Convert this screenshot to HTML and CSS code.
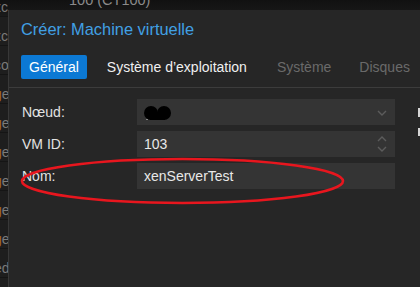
FILE: index.html
```html
<!DOCTYPE html>
<html lang="fr">
<head>
    <meta charset="UTF-8">
    <meta name="viewport" content="width=device-width, initial-scale=1.0">
    <title>Créer: Machine virtuelle</title>
    <link rel="stylesheet" href="styles.css">
</head>
<body>
    <!-- Liste en arrière-plan -->
    <div class="grid">
        <div class="row first"><span class="c1">xc</span><span class="c2">100 (CT100)</span></div>
        <div class="row"><span class="c1">xc</span></div>
        <div class="row"><span class="c1">co</span></div>
        <div class="row"><span class="c1 tag">ge</span></div>
        <div class="row"><span class="c1 tag">ge</span></div>
        <div class="row"><span class="c1 tag">ge</span></div>
        <div class="row"><span class="c1 tag">ge</span></div>
        <div class="row"><span class="c1 tag">ge</span></div>
        <div class="row"><span class="c1 tag">ge</span></div>
        <div class="row"><span class="c1">ed</span></div>
    </div>

    <!-- Fenêtre de création -->
    <div class="window">
        <div class="title">Créer: Machine virtuelle</div>

        <div class="tabs">
            <span class="tab active">Général</span>
            <span class="tab">Système d’exploitation</span>
            <span class="tab disabled">Système</span>
            <span class="tab disabled">Disques</span>
        </div>

        <div class="panel">
            <div class="form">
                <div class="field">
                    <label>Nœud:</label>
                    <div class="input">
                        <svg class="blob" width="28" height="15" viewBox="0 0 28 15">
                            <circle cx="7" cy="7" r="7" fill="#000"/>
                            <circle cx="20" cy="7" r="7" fill="#000"/>
                            <rect x="6" y="6" width="15" height="8" fill="#000"/>
                            <rect x="2" y="13" width="2" height="1" fill="#888"/>
                        </svg>
                        <svg class="chev" width="10" height="6" viewBox="0 0 10 6">
                            <path d="M1 1 L5 5 L9 1" fill="none" stroke="#5c5c5c" stroke-width="1.4"/>
                        </svg>
                    </div>
                </div>
                <div class="field">
                    <label>VM ID:</label>
                    <div class="input">
                        <span>103</span>
                        <span class="spin">
                            <svg width="10" height="6" viewBox="0 0 10 6">
                                <path d="M1 5 L5 1 L9 5" fill="none" stroke="#5c5c5c" stroke-width="1.4"/>
                            </svg>
                            <svg width="10" height="6" viewBox="0 0 10 6">
                                <path d="M1 1 L5 5 L9 1" fill="none" stroke="#5c5c5c" stroke-width="1.4"/>
                            </svg>
                        </span>
                    </div>
                </div>
                <div class="field">
                    <label>Nom:</label>
                    <div class="input"><span>xenServerTest</span></div>
                </div>
            </div>
            <div class="side">
                <span class="mark"></span>
                <span class="mark low"></span>
            </div>
        </div>
    </div>

    <!-- Annotation rouge -->
    <svg class="annot" width="420" height="287" viewBox="0 0 420 287">
        <ellipse cx="182.5" cy="181" rx="160.5" ry="22" fill="none" stroke="#e8161e" stroke-width="2.6"/>
    </svg>
</body>
</html>
```

FILE: styles.css
```css
/* Page */
body {
    margin: 0;
    width: 420px;
    height: 287px;
    overflow: hidden;
    position: relative;
    background-color: #1e1e1e;
    font-family: "Liberation Sans", Arial, sans-serif;
    font-size: 14px;
}

/* Liste derrière la fenêtre */
.grid {
    margin-top: -12px;
}

.row {
    display: flex;
    height: 29px;
    box-sizing: border-box;
    border-bottom: 1px solid #151515;
    line-height: 16px;
    color: #7a7a7a;
}

.row.first {
    background: linear-gradient(#0a0a0a, #1a1a1a);
}

.c1 {
    width: 75px;
    margin-left: -6px;
    padding-top: 11px;
}

.c1.tag::first-letter {
    color: #a2691c;
}

.c2 {
    padding-top: 4px;
    font-size: 14.5px;
    color: #8a8a8a;
}

/* Fenêtre */
.window {
    position: absolute;
    left: 8px;
    top: 10px;
    width: 460px;
    height: 300px;
    background-color: #262626;
    border-left: 1px solid #383838;
}

.title {
    padding: 9px 12px 0;
    font-size: 16.4px;
    line-height: 20px;
    color: #41a0e4;
}

.tabs {
    display: flex;
    gap: 12px;
    margin-top: 16px;
    padding: 0 12px 8px;
    border-bottom: 1px solid #3c3c3c;
}

.tab {
    height: 24px;
    line-height: 24px;
    padding: 0 8px;
    border-radius: 2px;
    color: #f0f0f0;
    white-space: nowrap;
}

.tab.active {
    background-color: #0c79d4;
    color: #fff;
}

.tab.wide {
    letter-spacing: 0.1px;
}

.tab.disabled {
    color: #6a6a6a;
}

.tab:nth-child(3) {
    margin-left: 2px;
}

/* Formulaire */
.panel {
    display: flex;
    padding: 11px 0 0 13px;
}

.field {
    display: flex;
    align-items: center;
    height: 26px;
    margin-bottom: 6px;
}

.field label {
    width: 115px;
    color: #e2e2e2;
}

.input {
    display: flex;
    align-items: center;
    justify-content: space-between;
    width: 258px;
    height: 26px;
    box-sizing: border-box;
    padding: 0 8px 0 7px;
    background-color: #343434;
    color: #e8e8e8;
}

.blob {
    margin-top: 3px;
}

.chev {
    margin-top: 1px;
}

.spin {
    display: flex;
    flex-direction: column;
    gap: 4px;
}

.spin svg {
    display: block;
}

/* Colonne de droite (coupée) */
.side {
    display: flex;
    flex-direction: column;
    margin-left: 23px;
    padding-top: 9px;
}

.mark {
    width: 9px;
    height: 9px;
    background-color: #d4d4d4;
}

.mark.low {
    height: 8px;
    margin-top: 11px;
}

/* Annotation */
.annot {
    position: absolute;
    left: 0;
    top: 0;
    pointer-events: none;
}
```
